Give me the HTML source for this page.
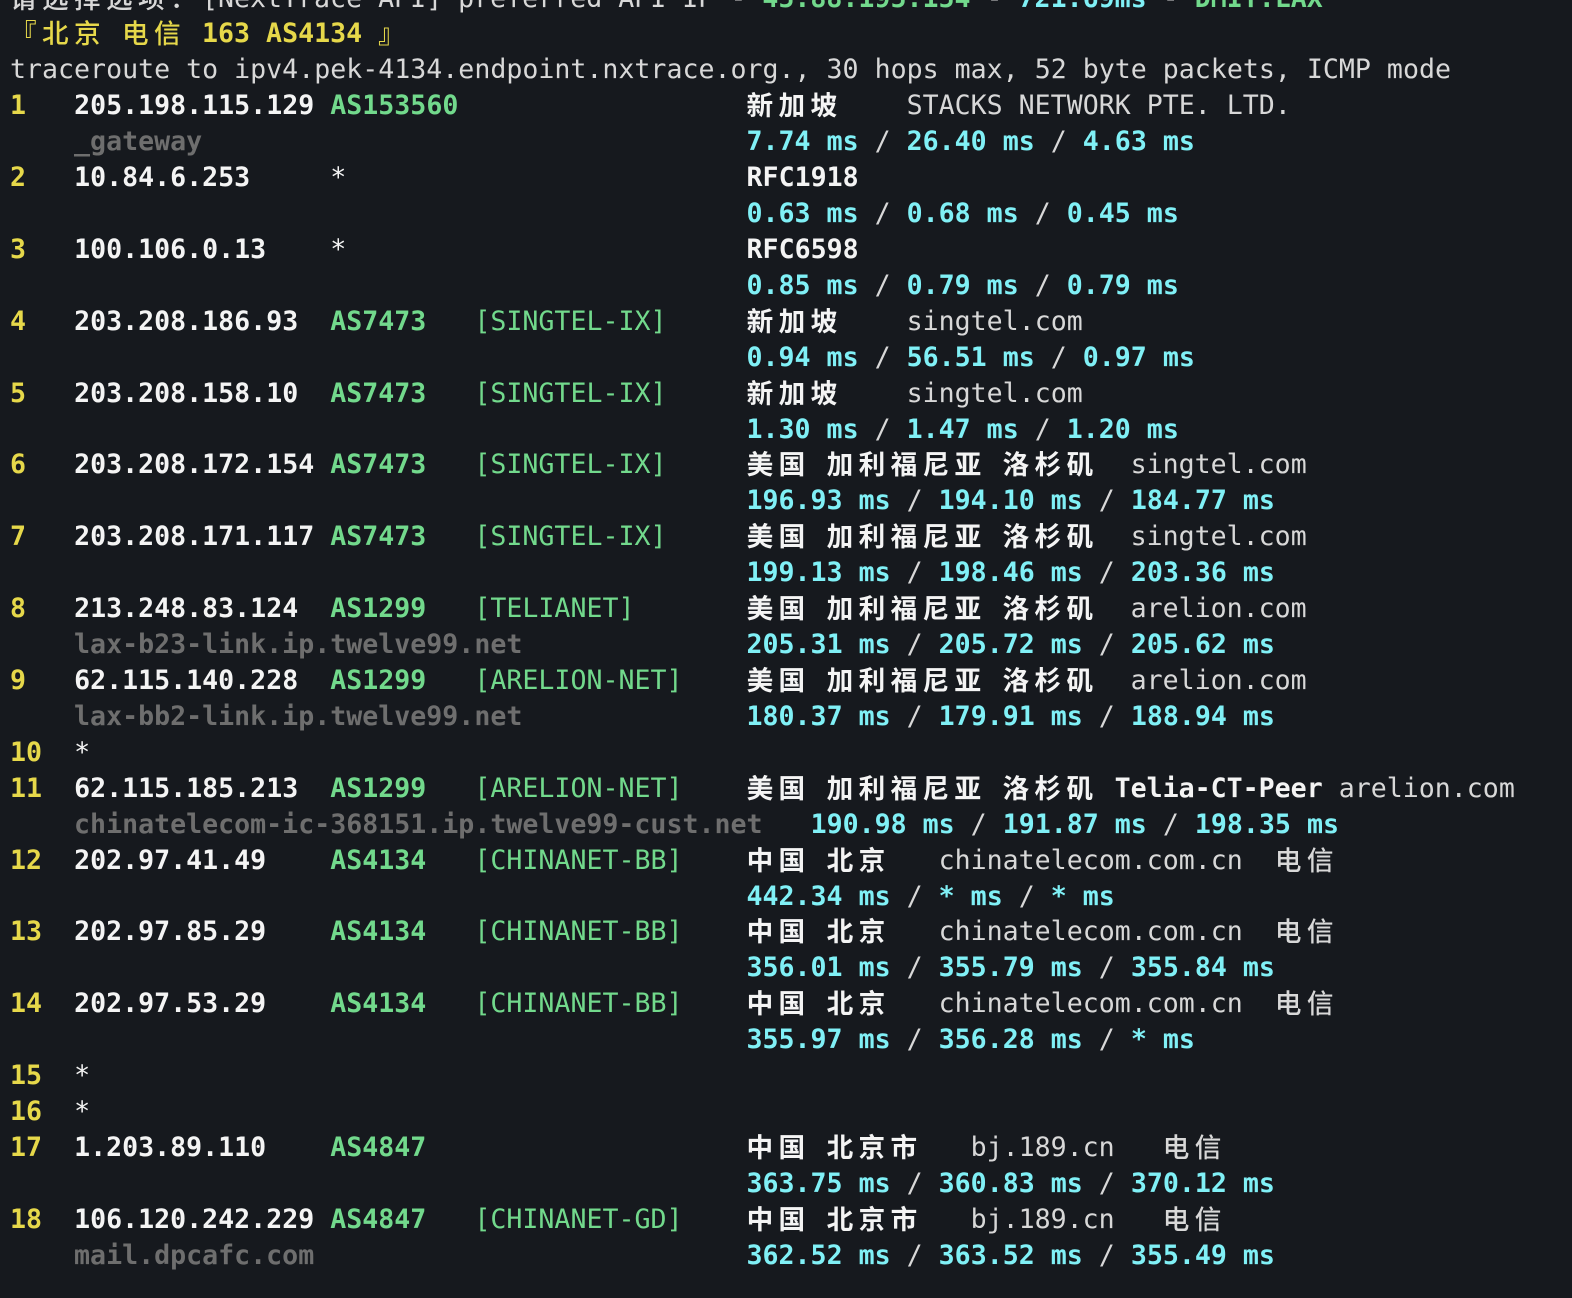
<!DOCTYPE html>
<html><head><meta charset="utf-8"><style>
html,body{margin:0;padding:0;background:#16191e;width:1572px;height:1298px;overflow:hidden}
pre{position:absolute;left:10px;top:-19.5px;margin:0;font-family:"DejaVu Sans Mono","Liberation Mono",monospace;font-size:26.6px;line-height:35.92px;color:#d8d8d8;white-space:pre}
.z{font-family:"Noto Sans CJK SC","WenQuanYi Zen Hei",sans-serif;letter-spacing:5.4px;font-weight:500;display:inline-block;height:35.9px;line-height:35.9px;vertical-align:top;overflow:visible;position:relative;top:-2px}
.y{color:#e6d84a;font-weight:bold}
.w{color:#f4f4f4;font-weight:bold}
.g{color:#72d98c;font-weight:bold}
.b{color:#72d98c}
.c{color:#80f0f6;font-weight:bold}
.h{color:#6e6e6e;font-weight:bold}
.s{color:#f4f4f4}
</style></head><body><pre><span class="z">请选择选项：</span>[NextTrace API] preferred API IP - <span class="g">45.88.195.154</span> - <span class="c">721.69ms</span> - <span class="g">DMIT.LAX</span>
<span class="y"><span class="z">『北京</span> <span class="z">电信</span> 163 AS4134 <span class="z">』</span></span>
traceroute to ipv4.pek-4134.endpoint.nxtrace.org., 30 hops max, 52 byte packets, ICMP mode
<span class="y">1</span>   <span class="w">205.198.115.129</span> <span class="g">AS153560</span>                  <span class="z w">新加坡</span>    STACKS NETWORK PTE. LTD.
    <span class="h">_gateway</span>                                  <span class="c">7.74 ms</span> / <span class="c">26.40 ms</span> / <span class="c">4.63 ms</span>
<span class="y">2</span>   <span class="w">10.84.6.253</span>     <span class="s">*</span>                         <span class="w">RFC1918</span>
                                              <span class="c">0.63 ms</span> / <span class="c">0.68 ms</span> / <span class="c">0.45 ms</span>
<span class="y">3</span>   <span class="w">100.106.0.13</span>    <span class="s">*</span>                         <span class="w">RFC6598</span>
                                              <span class="c">0.85 ms</span> / <span class="c">0.79 ms</span> / <span class="c">0.79 ms</span>
<span class="y">4</span>   <span class="w">203.208.186.93</span>  <span class="g">AS7473</span>   <span class="b">[SINGTEL-IX]</span>     <span class="z w">新加坡</span>    singtel.com
                                              <span class="c">0.94 ms</span> / <span class="c">56.51 ms</span> / <span class="c">0.97 ms</span>
<span class="y">5</span>   <span class="w">203.208.158.10</span>  <span class="g">AS7473</span>   <span class="b">[SINGTEL-IX]</span>     <span class="z w">新加坡</span>    singtel.com
                                              <span class="c">1.30 ms</span> / <span class="c">1.47 ms</span> / <span class="c">1.20 ms</span>
<span class="y">6</span>   <span class="w">203.208.172.154</span> <span class="g">AS7473</span>   <span class="b">[SINGTEL-IX]</span>     <span class="z w">美国</span> <span class="z w">加利福尼亚</span> <span class="z w">洛杉矶</span>  singtel.com
                                              <span class="c">196.93 ms</span> / <span class="c">194.10 ms</span> / <span class="c">184.77 ms</span>
<span class="y">7</span>   <span class="w">203.208.171.117</span> <span class="g">AS7473</span>   <span class="b">[SINGTEL-IX]</span>     <span class="z w">美国</span> <span class="z w">加利福尼亚</span> <span class="z w">洛杉矶</span>  singtel.com
                                              <span class="c">199.13 ms</span> / <span class="c">198.46 ms</span> / <span class="c">203.36 ms</span>
<span class="y">8</span>   <span class="w">213.248.83.124</span>  <span class="g">AS1299</span>   <span class="b">[TELIANET]</span>       <span class="z w">美国</span> <span class="z w">加利福尼亚</span> <span class="z w">洛杉矶</span>  arelion.com
    <span class="h">lax-b23-link.ip.twelve99.net</span>              <span class="c">205.31 ms</span> / <span class="c">205.72 ms</span> / <span class="c">205.62 ms</span>
<span class="y">9</span>   <span class="w">62.115.140.228</span>  <span class="g">AS1299</span>   <span class="b">[ARELION-NET]</span>    <span class="z w">美国</span> <span class="z w">加利福尼亚</span> <span class="z w">洛杉矶</span>  arelion.com
    <span class="h">lax-bb2-link.ip.twelve99.net</span>              <span class="c">180.37 ms</span> / <span class="c">179.91 ms</span> / <span class="c">188.94 ms</span>
<span class="y">10</span>  <span class="s">*</span>
<span class="y">11</span>  <span class="w">62.115.185.213</span>  <span class="g">AS1299</span>   <span class="b">[ARELION-NET]</span>    <span class="z w">美国</span> <span class="z w">加利福尼亚</span> <span class="z w">洛杉矶</span> <span class="w">Telia-CT-Peer</span> arelion.com
    <span class="h">chinatelecom-ic-368151.ip.twelve99-cust.net</span>   <span class="c">190.98 ms</span> / <span class="c">191.87 ms</span> / <span class="c">198.35 ms</span>
<span class="y">12</span>  <span class="w">202.97.41.49</span>    <span class="g">AS4134</span>   <span class="b">[CHINANET-BB]</span>    <span class="z w">中国</span> <span class="z w">北京</span>   chinatelecom.com.cn  <span class="z">电信</span>
                                              <span class="c">442.34 ms</span> / <span class="c">* ms</span> / <span class="c">* ms</span>
<span class="y">13</span>  <span class="w">202.97.85.29</span>    <span class="g">AS4134</span>   <span class="b">[CHINANET-BB]</span>    <span class="z w">中国</span> <span class="z w">北京</span>   chinatelecom.com.cn  <span class="z">电信</span>
                                              <span class="c">356.01 ms</span> / <span class="c">355.79 ms</span> / <span class="c">355.84 ms</span>
<span class="y">14</span>  <span class="w">202.97.53.29</span>    <span class="g">AS4134</span>   <span class="b">[CHINANET-BB]</span>    <span class="z w">中国</span> <span class="z w">北京</span>   chinatelecom.com.cn  <span class="z">电信</span>
                                              <span class="c">355.97 ms</span> / <span class="c">356.28 ms</span> / <span class="c">* ms</span>
<span class="y">15</span>  <span class="s">*</span>
<span class="y">16</span>  <span class="s">*</span>
<span class="y">17</span>  <span class="w">1.203.89.110</span>    <span class="g">AS4847</span>                    <span class="z w">中国</span> <span class="z w">北京市</span>   bj.189.cn   <span class="z">电信</span>
                                              <span class="c">363.75 ms</span> / <span class="c">360.83 ms</span> / <span class="c">370.12 ms</span>
<span class="y">18</span>  <span class="w">106.120.242.229</span> <span class="g">AS4847</span>   <span class="b">[CHINANET-GD]</span>    <span class="z w">中国</span> <span class="z w">北京市</span>   bj.189.cn   <span class="z">电信</span>
    <span class="h">mail.dpcafc.com</span>                           <span class="c">362.52 ms</span> / <span class="c">363.52 ms</span> / <span class="c">355.49 ms</span>
</pre></body></html>
